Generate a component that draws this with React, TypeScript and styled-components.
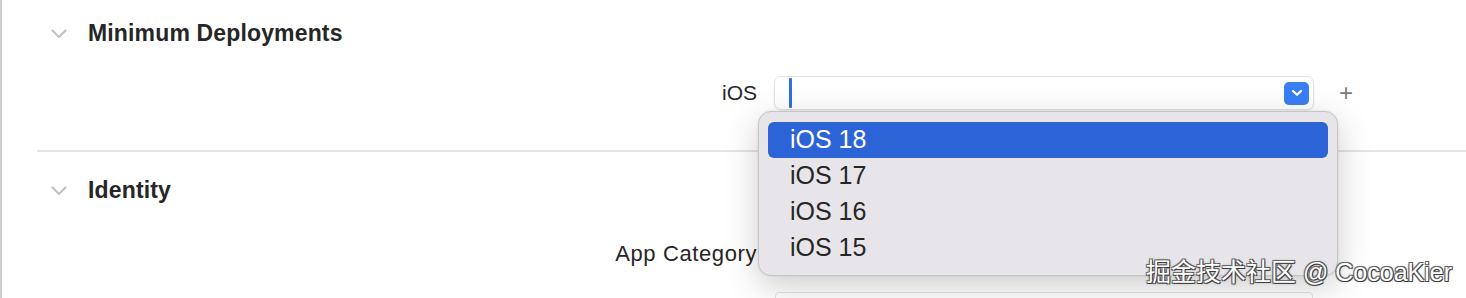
import React from "react";
import styled, { createGlobalStyle } from "styled-components";

const GlobalStyle = createGlobalStyle`
  html, body {
    margin: 0;
    padding: 0;
    background: #ffffff;
  }
  body {
    font-family: "Liberation Sans", Arial, sans-serif;
    color: #262626;
  }
`;

const versions = ["iOS 18", "iOS 17", "iOS 16", "iOS 15"];

const Chevron = () => (
  <svg width="16" height="10" viewBox="0 0 16 10">
    <path
      d="M1.5 1.5 L8 8 L14.5 1.5"
      fill="none"
      stroke="#c2c2c2"
      strokeWidth="2.2"
      strokeLinecap="round"
      strokeLinejoin="round"
    />
  </svg>
);

const App = () => {
  return (
    <Page>
      <GlobalStyle />
      <Section>
        <SectionHeader>
          <ChevronSlot>
            <Chevron />
          </ChevronSlot>
          <SectionTitle>Minimum Deployments</SectionTitle>
        </SectionHeader>
        <FieldRow>
          <Label>iOS</Label>
          <ComboField>
            <Caret />
            <ComboButton>
              <svg width="12" height="8" viewBox="0 0 12 8">
                <path
                  d="M2 2 L6 5.8 L10 2"
                  fill="none"
                  stroke="#ffffff"
                  strokeWidth="2.2"
                  strokeLinecap="round"
                  strokeLinejoin="round"
                />
              </svg>
            </ComboButton>
          </ComboField>
          <AddButton>+</AddButton>
        </FieldRow>
      </Section>
      <Divider />
      <Section>
        <IdentityHeader>
          <ChevronSlot>
            <Chevron />
          </ChevronSlot>
          <SectionTitle>Identity</SectionTitle>
        </IdentityHeader>
        <CategoryRow>
          <CategoryLabel>App Category</CategoryLabel>
        </CategoryRow>
        <NextFieldRow>
          <Spacer />
          <PlainField />
        </NextFieldRow>
      </Section>

      <Menu>
        {versions.map((v, i) => (
          <MenuItem key={v} $active={i === 0}>
            {v}
          </MenuItem>
        ))}
      </Menu>

      <Watermark>掘金技术社区 @ CocoaKier</Watermark>
    </Page>
  );
};

const Page = styled.div`
  position: relative;
  width: 1466px;
  height: 298px;
  overflow: hidden;
  box-sizing: border-box;
  border-left: 2px solid #cfcfcf;
`;

const Section = styled.div`
  display: flex;
  flex-direction: column;
`;

const SectionHeader = styled.div`
  display: flex;
  align-items: center;
  height: 30px;
  margin-top: 18px;
`;

const IdentityHeader = styled(SectionHeader)`
  margin-top: 23px;
`;

const ChevronSlot = styled.div`
  width: 16px;
  height: 10px;
  margin-left: 49px;
  margin-right: 21px;
  display: flex;
  margin-top: 2px;
`;

const SectionTitle = styled.div`
  font-weight: 700;
  font-size: 23px;
  color: #262626;
  letter-spacing: 0.15px;
`;

const FieldRow = styled.div`
  display: grid;
  grid-template-columns: 755px 540px auto;
  column-gap: 17px;
  align-items: center;
  margin-top: 28px;
  height: 34px;
`;

const Label = styled.div`
  text-align: right;
  font-size: 21px;
  color: #262626;
`;

const CategoryLabel = styled(Label)`
  font-size: 22px;
  letter-spacing: 0.6px;
`;

const ComboField = styled.div`
  position: relative;
  height: 34px;
  box-sizing: border-box;
  border: 1px solid #e3e3e3;
  border-radius: 7px;
  background: #ffffff;
  box-shadow: 0 1px 2px rgba(0, 0, 0, 0.07);
  display: flex;
  align-items: center;
  justify-content: space-between;
  padding: 0 4px 0 14px;
`;

const Caret = styled.div`
  width: 3px;
  height: 30px;
  border-radius: 1px;
  background: #2f6fe4;
`;

const ComboButton = styled.div`
  width: 25px;
  height: 23px;
  border-radius: 5px;
  background: #3a7df5;
  display: flex;
  align-items: center;
  justify-content: center;
`;

const AddButton = styled.div`
  font-size: 24px;
  color: #7a7a7a;
  font-weight: 300;
  margin-left: 8px;
  line-height: 1;
`;

const Divider = styled.div`
  height: 2px;
  background: #e4e4e4;
  margin: 40px 0 0 35px;
`;

const CategoryRow = styled.div`
  display: grid;
  grid-template-columns: 755px;
  align-items: center;
  margin-top: 34px;
  height: 30px;
`;

const NextFieldRow = styled.div`
  display: grid;
  grid-template-columns: 756px 538px;
  column-gap: 17px;
  margin-top: 23px;
`;

const Spacer = styled.div``;

const PlainField = styled.div`
  height: 34px;
  box-sizing: border-box;
  border: 1px solid #e3e3e3;
  border-radius: 4px;
  background: #ffffff;
`;

const Menu = styled.div`
  position: absolute;
  left: 756px;
  top: 111px;
  width: 580px;
  height: 165px;
  box-sizing: border-box;
  padding: 10px 9px;
  background: #e7e5e9;
  border: 1px solid #c6c6c8;
  border-radius: 13px;
  box-shadow: 0 10px 34px rgba(0, 0, 0, 0.2), 0 0 3px rgba(0, 0, 0, 0.08);
  display: flex;
  flex-direction: column;
`;

const MenuItem = styled.div<{ $active?: boolean }>`
  height: 36px;
  display: flex;
  align-items: center;
  padding-left: 22px;
  border-radius: 6px;
  font-size: 25px;
  color: ${(p) => (p.$active ? "#ffffff" : "#262626")};
  background: ${(p) => (p.$active ? "#2c64d8" : "transparent")};
`;

const Watermark = styled.div`
  position: absolute;
  right: 14px;
  bottom: 10px;
  font-family: "Liberation Sans", "Noto Sans CJK SC", sans-serif;
  font-size: 25px;
  color: #ffffff;
  text-shadow: 1px 1px 0 #3a3a3a, -1px -1px 0 #6a6a6a, 1px -1px 0 #555,
    -1px 1px 0 #555, 0 0 3px rgba(0, 0, 0, 0.4);
  white-space: nowrap;
`;

export default App;
